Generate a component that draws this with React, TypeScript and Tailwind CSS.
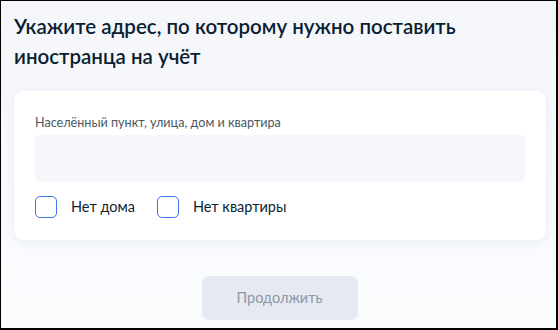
import React from "react";

function Checkbox({ label }: { label: string }) {
  return (
    <label className="flex items-center gap-[14px]">
      <span className="block w-[22px] h-[22px] rounded-[5px] border-[1.5px] border-[#3b72e6] bg-white" />
      <span className="text-[14.5px] leading-[20px] text-[#0b1f33]">{label}</span>
    </label>
  );
}

export default function App() {
  return (
    <div
      className="w-[558px] h-[330px] overflow-hidden border-l border-t border-r-2 border-b-2 border-black bg-gradient-to-b from-[#f4f6fa] to-[#fbfcfe]"
      style={{ fontFamily: "Lato, 'Noto Sans', sans-serif" }}
    >
      <div className="pl-[13px] pr-[10px] pt-[10px]">
        <h1 className="text-[20.5px] leading-[30px] font-semibold text-[#0b1f33] pr-[40px]">
          Укажите адрес, по которому нужно поставить иностранца на учёт
        </h1>
        <div className="mt-[20px] bg-white rounded-[10px] shadow-[0_2px_8px_rgba(200,210,230,0.35)] px-[21px] pt-[24px] pb-[22px]">
          <div className="text-[12.6px] leading-[16px] text-[#4b5663]">
            Населённый пункт, улица, дом и квартира
          </div>
          <div className="mt-[4px] h-[47px] rounded-[4px] bg-[#f5f7fa]" />
          <div className="mt-[14px] flex items-center gap-[22px]">
            <Checkbox label="Нет дома" />
            <Checkbox label="Нет квартиры" />
          </div>
        </div>
        <div className="mt-[36px] flex justify-center pr-[1px]">
          <button className="w-[156px] h-[44px] rounded-[7px] bg-[#e4e9f2] text-[14.5px] text-[#8e97a5]">
            Продолжить
          </button>
        </div>
      </div>
    </div>
  );
}
